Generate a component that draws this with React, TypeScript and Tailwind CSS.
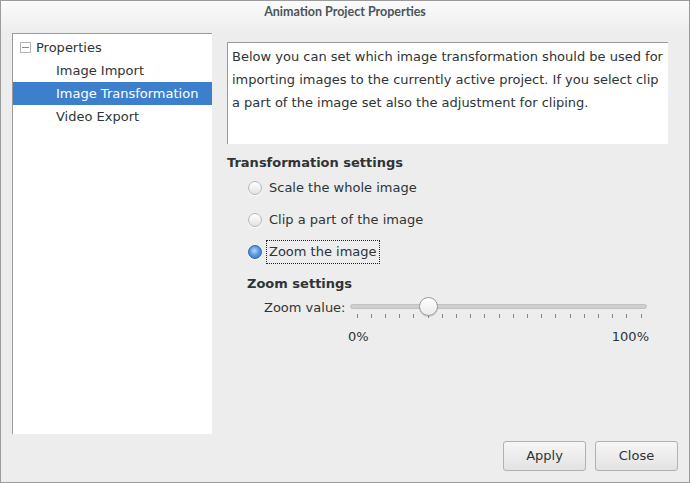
import React from "react";

const font = { fontFamily: '"DejaVu Sans", "Noto Sans", sans-serif' };

function Radio({ checked, label, focused }: { checked?: boolean; label: string; focused?: boolean }) {
  return (
    <div className="flex items-center h-[22px] ml-[21px]">
      <span
        className={
          checked
            ? "w-[14px] h-[14px] rounded-full border border-[#3466a8] bg-[radial-gradient(circle_at_45%_40%,#b9dafc_0%,#5b9ae0_45%,#2f6fc0_100%)] shadow-[0_1px_0_#ffffff]"
            : "w-[14px] h-[14px] rounded-full border border-[#b8b8b8] bg-gradient-to-b from-[#ffffff] to-[#e2e2e2] shadow-[0_1px_0_#ffffff]"
        }
      />
      <span
        className={
          "ml-[5px] px-[2px] h-[22px] flex items-center text-[13px] text-[#2e3436] " +
          (focused ? "outline outline-1 outline-dotted outline-[#222]" : "")
        }
      >
        {label}
      </span>
    </div>
  );
}

function Slider() {
  const ticks = Array.from({ length: 21 }, (_, i) => i);
  return (
    <div className="relative w-[297px] h-[48px]">
      <div className="absolute left-0 right-0 top-[6px] h-[5px] rounded-full bg-[#cfcfcf] border border-[#c2c2c2]" />
      {ticks.map((i) => (
        <div
          key={i}
          className="absolute top-[16px] w-px h-[4px] bg-[#8a8a8a]"
          style={{ left: 6.5 + i * 14.2 }}
        />
      ))}
      <div className="absolute left-[69px] top-[-1px] w-[19px] h-[19px] rounded-full border border-[#9c9c9c] bg-gradient-to-b from-[#ffffff] to-[#eaeaea] shadow-[0_1px_1px_rgba(0,0,0,0.15)]" />
      <span className="absolute left-[-2px] top-[29px] text-[13px] text-[#2e3436]">0%</span>
      <span className="absolute right-[-2px] top-[29px] text-[13px] text-[#2e3436]">100%</span>
    </div>
  );
}

export default function App() {
  return (
    <div
      className="w-[690px] h-[483px] border border-[#9b9b9b] bg-[#ededed] flex flex-col text-[#2e3436]"
      style={font}
    >
      {/* title bar */}
      <div className="h-[32px] bg-gradient-to-b from-[#fbfbfb] to-[#ededed] flex justify-center">
        <span
          className="mt-[2px] text-[12.5px] font-bold text-[#4b5456]"
          style={{ fontFamily: 'Lato, "Liberation Sans", sans-serif' }}
        >
          Animation Project Properties
        </span>
      </div>

      <div className="flex">
        {/* tree */}
        <div className="ml-[11px] w-[200px] h-[401px] bg-white border-l border-t border-[#9a9a9a] pt-[2px]">
          <div className="h-[23px] flex items-center text-[13px]">
            <span className="ml-[7px] w-[11px] h-[11px] border border-[#b4b4b4] flex items-center justify-center">
              <span className="w-[7px] h-px bg-[#8a8a8a]" />
            </span>
            <span className="ml-[5px]">Properties</span>
          </div>
          <div className="h-[23px] flex items-center text-[13px] pl-[43px]">Image Import</div>
          <div className="h-[23px] flex items-center text-[13px] pl-[43px] bg-[#3c7fcd] text-white">
            Image Transformation
          </div>
          <div className="h-[23px] flex items-center text-[13px] pl-[43px]">Video Export</div>
        </div>

        {/* right */}
        <div className="ml-[15px] w-[441px] flex flex-col">
          <div className="mt-[9px] h-[102px] bg-white border-l border-t border-[#9a9a9a] pl-[4px] pt-[2px] text-[13px] leading-[23px]">
            Below you can set which image transformation should be used for importing images to the currently active project. If you select clip a part of the image set also the adjustment for cliping.
          </div>
          <div className="mt-[10px] text-[13px] font-bold leading-[17px]">Transformation settings</div>
          <div className="mt-[6px] flex flex-col gap-[10px]">
            <Radio label="Scale the whole image" />
            <Radio label="Clip a part of the image" />
            <Radio checked focused label="Zoom the image" />
          </div>
          <div className="mt-[12px] ml-[20px] text-[13px] font-bold leading-[17px]">Zoom settings</div>
          <div className="mt-[6px] ml-[37px] flex">
            <span className="text-[13px] leading-[20px] w-[86px]">Zoom value:</span>
            <Slider />
          </div>
        </div>
      </div>

      <div className="flex justify-end gap-[9px] pr-[11px] pt-[7px]">
        <button className="w-[83px] h-[30px] rounded-[3px] border border-[#b1b1b1] bg-gradient-to-b from-[#f6f6f6] to-[#e3e3e3] text-[13px] text-[#2e3436]">
          Apply
        </button>
        <button className="w-[83px] h-[30px] rounded-[3px] border border-[#b1b1b1] bg-gradient-to-b from-[#f6f6f6] to-[#e3e3e3] text-[13px] text-[#2e3436]">
          Close
        </button>
      </div>
    </div>
  );
}
